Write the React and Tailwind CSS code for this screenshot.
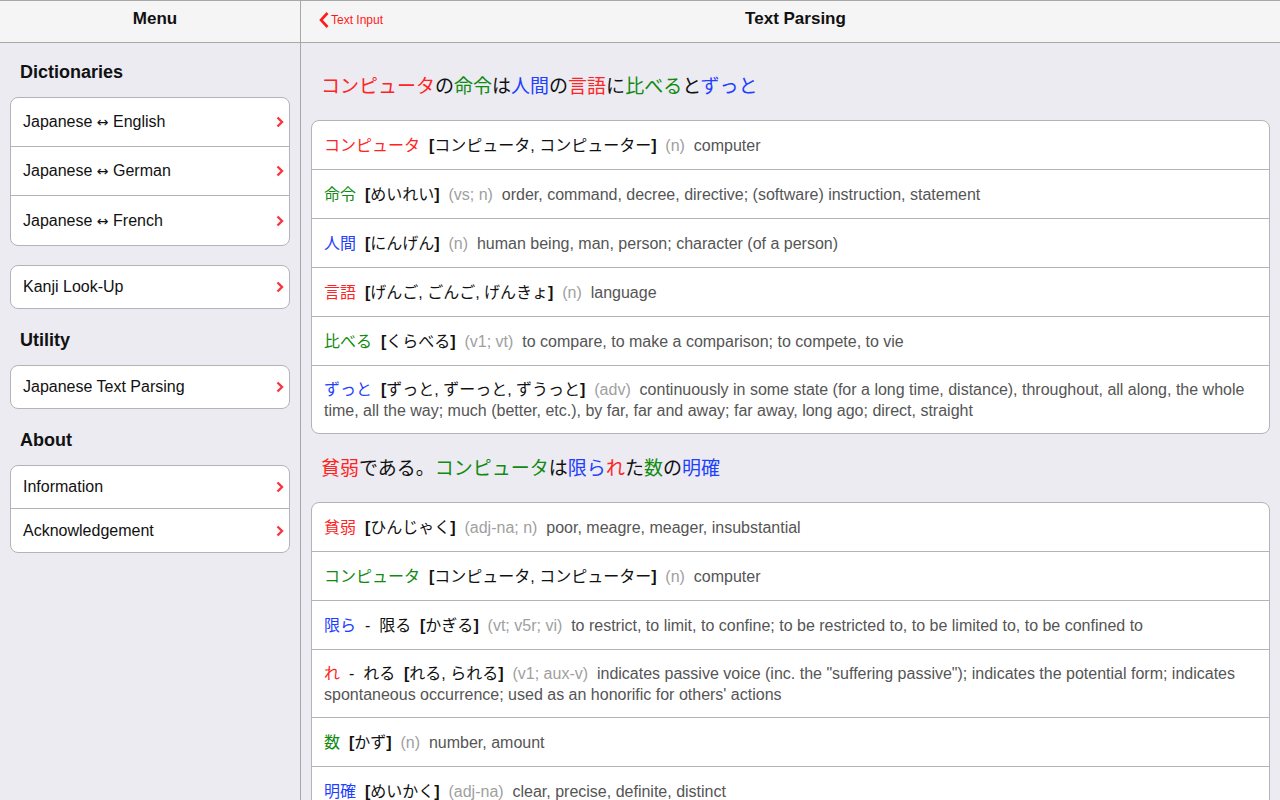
import React from "react";

const R = "text-[#ff2323]";
const G = "text-[#118a11]";
const B = "text-[#1e40ff]";

const font = { fontFamily: '"Liberation Sans", "Noto Sans CJK JP", Arial, sans-serif' };

function Chevron() {
  return (
    <svg width="8" height="12" viewBox="0 0 8 12" className="shrink-0">
      <path d="M1.5 1.5 L6 6 L1.5 10.5" fill="none" stroke="#f8363d" strokeWidth="2.4" />
    </svg>
  );
}

function SideRow({ label, h, last }) {
  return (
    <div className={`flex items-center justify-between pl-[12px] pr-[5px] ${h} ${last ? "" : "border-b border-[#b4b4b8]"}`}>
      <span className="text-[16px] text-[#111]">
        {label.split("↔").map((p, i, arr) => (
          <React.Fragment key={i}>
            {p}
            {i < arr.length - 1 && <span style={{ fontFamily: '"DejaVu Sans", sans-serif' }} className="text-[14px]">↔</span>}
          </React.Fragment>
        ))}
      </span>
      <Chevron />
    </div>
  );
}

function SideCard({ items, h }) {
  return (
    <div className="mx-[10px] bg-white border border-[#b4b4b8] rounded-[8px] overflow-hidden">
      {items.map((it, i) => (
        <SideRow key={it} label={it} h={h} last={i === items.length - 1} />
      ))}
    </div>
  );
}

function Heading({ children, cls }) {
  return <div className={`px-[20px] text-[18px] leading-[28px] font-bold text-[#111] ${cls}`}>{children}</div>;
}

function Entry({ head, base, reading, pos, def, last }) {
  return (
    <div className={`min-h-[49px] flex items-center px-[12px] py-[12.5px] ${last ? "" : "border-b border-[#b4b4b8]"}`}>
      <div className="text-[16px] leading-[21px] text-[#555]">
        {head}
        {base && <span className="text-[#111]">&nbsp; - &nbsp;{base}</span>}
        <span className="font-bold text-[#111]">&nbsp; [</span>
        <span className="text-[#111]">{reading}</span>
        <span className="font-bold text-[#111]">]</span>
        <span className="text-[#a0a0a0]">&nbsp; ({pos})</span>
        <span>&nbsp; {def}</span>
      </div>
    </div>
  );
}

function Card({ entries }) {
  return (
    <div className="mx-[10px] bg-white border border-[#b4b4b8] rounded-[8px] overflow-hidden">
      {entries.map((e, i) => (
        <Entry key={i} {...e} last={i === entries.length - 1} />
      ))}
    </div>
  );
}

const card1 = [
  { head: <span className={R}>コンピュータ</span>, reading: "コンピュータ, コンピューター", pos: "n", def: "computer" },
  { head: <span className={G}>命令</span>, reading: "めいれい", pos: "vs; n", def: "order, command, decree, directive; (software) instruction, statement" },
  { head: <span className={B}>人間</span>, reading: "にんげん", pos: "n", def: "human being, man, person; character (of a person)" },
  { head: <span className={R}>言語</span>, reading: "げんご, ごんご, げんきょ", pos: "n", def: "language" },
  { head: <span className={G}>比べる</span>, reading: "くらべる", pos: "v1; vt", def: "to compare, to make a comparison; to compete, to vie" },
  { head: <span className={B}>ずっと</span>, reading: "ずっと, ずーっと, ずうっと", pos: "adv", def: "continuously in some state (for a long time, distance), throughout, all along, the whole time, all the way; much (better, etc.), by far, far and away; far away, long ago; direct, straight" },
];

const card2 = [
  { head: <span className={R}>貧弱</span>, reading: "ひんじゃく", pos: "adj-na; n", def: "poor, meagre, meager, insubstantial" },
  { head: <span className={G}>コンピュータ</span>, reading: "コンピュータ, コンピューター", pos: "n", def: "computer" },
  { head: <span className={B}>限ら</span>, base: "限る", reading: "かぎる", pos: "vt; v5r; vi", def: "to restrict, to limit, to confine; to be restricted to, to be limited to, to be confined to" },
  { head: <span className={R}>れ</span>, base: "れる", reading: "れる, られる", pos: "v1; aux-v", def: "indicates passive voice (inc. the \"suffering passive\"); indicates the potential form; indicates spontaneous occurrence; used as an honorific for others' actions" },
  { head: <span className={G}>数</span>, reading: "かず", pos: "n", def: "number, amount" },
  { head: <span className={B}>明確</span>, reading: "めいかく", pos: "adj-na", def: "clear, precise, definite, distinct" },
];

export default function App() {
  return (
    <div style={font} className="w-[1280px] h-[800px] overflow-hidden bg-[#ebebf1] flex flex-col border-t border-[#a8a8a8]">
      <div className="flex h-[42px] shrink-0 bg-[#f5f5f5] border-b border-[#a8a8a8]">
        <div className="w-[301px] border-r border-[#a8a8a8] flex justify-center pl-[10px] pt-[5px]">
          <span className="text-[17px] font-bold text-[#111]">Menu</span>
        </div>
        <div className="flex-1 relative flex justify-center pl-[10px] pt-[5px]">
          <div className="absolute left-[17px] top-[10px] flex items-center gap-[1px]">
            <svg width="12" height="18" viewBox="0 0 12 18">
              <path d="M9.5 2 L3 9 L9.5 16" fill="none" stroke="#ff1a1a" strokeWidth="2.6" />
            </svg>
            <span className="text-[12px] text-[#ff1a1a]">Text Input</span>
          </div>
          <span className="text-[17px] font-bold text-[#111]">Text Parsing</span>
        </div>
      </div>
      <div className="flex flex-1 min-h-0">
        <div className="w-[301px] shrink-0 border-r border-[#a8a8a8]">
          <Heading cls="pt-[15px] pb-[11px]">Dictionaries</Heading>
          <SideCard items={["Japanese ↔ English", "Japanese ↔ German", "Japanese ↔ French"]} h="h-[49px]" />
          <div className="h-[19px]" />
          <SideCard items={["Kanji Look-Up"]} h="h-[42px]" />
          <Heading cls="pt-[17px] pb-[11px]">Utility</Heading>
          <SideCard items={["Japanese Text Parsing"]} h="h-[42px]" />
          <Heading cls="pt-[17px] pb-[11px]">About</Heading>
          <SideCard items={["Information", "Acknowledgement"]} h="h-[43px]" />
        </div>
        <div className="flex-1 overflow-hidden">
          <div className="px-[20px] pt-[31px] pb-[20px] text-[19px] leading-[26px] text-[#111]">
            <span className={R}>コンピュータ</span>の<span className={G}>命令</span>は<span className={B}>人間</span>の<span className={R}>言語</span>に<span className={G}>比べる</span>と<span className={B}>ずっと</span>
          </div>
          <Card entries={card1} />
          <div className="px-[20px] pt-[22px] pb-[20px] text-[19px] leading-[26px] text-[#111]">
            <span className={R}>貧弱</span>である。<span className={G}>コンピュータ</span>は<span className={B}>限ら</span><span className={R}>れ</span>た<span className={G}>数</span>の<span className={B}>明確</span>
          </div>
          <Card entries={card2} />
        </div>
      </div>
    </div>
  );
}
